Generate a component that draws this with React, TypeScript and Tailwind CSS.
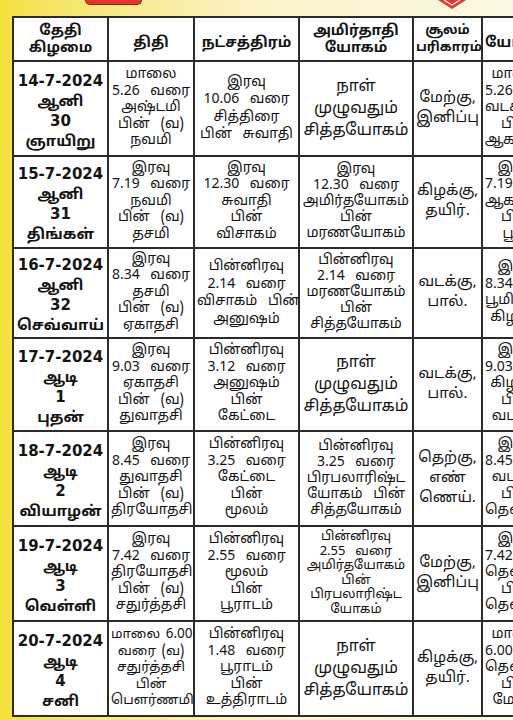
const tamil = "font-['Noto_Sans_Tamil','Lohit_Tamil','Noto_Sans',sans-serif]";

type Row = {
	h: string;
	date: string[];
	thithi: string[];
	star: string[];
	yogam: string[];
	bigYogam?: boolean;
	soolam: string[];
	yogini: string[];
};

const rows: Row[] = [
	{
		h: "h-[95px]",
		date: ["14-7-2024", "ஆனி", "30", "ஞாயிறு"],
		thithi: ["மாலை", "5.26 வரை", "அஷ்டமி", "பின் (வ)", "நவமி"],
		star: ["இரவு", "10.06 வரை", "சித்திரை", "பின் சுவாதி"],
		yogam: ["நாள்", "முழுவதும்", "சித்தயோகம்"],
		bigYogam: true,
		soolam: ["மேற்கு,", "இனிப்பு"],
		yogini: ["மாலை", "5.26 வரை", "வடகிழக்கு", "பின்", "ஆகாயம்"],
	},
	{
		h: "h-[92px]",
		date: ["15-7-2024", "ஆனி", "31", "திங்கள்"],
		thithi: ["இரவு", "7.19 வரை", "நவமி", "பின் (வ)", "தசமி"],
		star: ["இரவு", "12.30 வரை", "சுவாதி", "பின்", "விசாகம்"],
		yogam: ["இரவு", "12.30 வரை", "அமிர்தயோகம்", "பின்", "மரணயோகம்"],
		soolam: ["கிழக்கு,", "தயிர்."],
		yogini: ["இரவு", "7.19 வரை", "ஆகாயம்", "பின்", "பூமி"],
	},
	{
		h: "h-[90px]",
		date: ["16-7-2024", "ஆனி", "32", "செவ்வாய்"],
		thithi: ["இரவு", "8.34 வரை", "தசமி", "பின் (வ)", "ஏகாதசி"],
		star: ["பின்னிரவு", "2.14 வரை", "விசாகம் பின்", "அனுஷம்"],
		yogam: ["பின்னிரவு", "2.14 வரை", "மரணயோகம்", "பின்", "சித்தயோகம்"],
		soolam: ["வடக்கு,", "பால்."],
		yogini: ["இரவு", "8.34 வரை", "பூமி பின்", "கிழக்கு"],
	},
	{
		h: "h-[93px]",
		date: ["17-7-2024", "ஆடி", "1", "புதன்"],
		thithi: ["இரவு", "9.03 வரை", "ஏகாதசி", "பின் (வ)", "துவாதசி"],
		star: ["பின்னிரவு", "3.12 வரை", "அனுஷம்", "பின்", "கேட்டை"],
		yogam: ["நாள்", "முழுவதும்", "சித்தயோகம்"],
		bigYogam: true,
		soolam: ["வடக்கு,", "பால்."],
		yogini: ["இரவு", "9.03 வரை", "கிழக்கு", "பின்", "வடக்கு"],
	},
	{
		h: "h-[95px]",
		date: ["18-7-2024", "ஆடி", "2", "வியாழன்"],
		thithi: ["இரவு", "8.45 வரை", "துவாதசி", "பின் (வ)", "திரயோதசி"],
		star: ["பின்னிரவு", "3.25 வரை", "கேட்டை", "பின்", "மூலம்"],
		yogam: ["பின்னிரவு", "3.25 வரை", "பிரபலாரிஷ்ட", "யோகம் பின்", "சித்தயோகம்"],
		soolam: ["தெற்கு,", "எண்", "ணெய்."],
		yogini: ["இரவு", "8.45 வரை", "வடக்கு", "பின்", "தென்கிழக்கு"],
	},
	{
		h: "h-[95px]",
		date: ["19-7-2024", "ஆடி", "3", "வெள்ளி"],
		thithi: ["இரவு", "7.42 வரை", "திரயோதசி", "பின் (வ)", "சதுர்த்தசி"],
		star: ["பின்னிரவு", "2.55 வரை", "மூலம்", "பின்", "பூராடம்"],
		yogam: ["பின்னிரவு", "2.55 வரை", "அமிர்தயோகம்", "பின்", "பிரபலாரிஷ்ட", "யோகம்"],
		soolam: ["மேற்கு,", "இனிப்பு"],
		yogini: ["இரவு", "7.42 வரை", "தென்கிழக்கு", "பின்", "தென்மேற்கு"],
	},
	{
		h: "h-[95px]",
		date: ["20-7-2024", "ஆடி", "4", "சனி"],
		thithi: ["மாலை 6.00", "வரை (வ)", "சதுர்த்தசி", "பின்", "பௌர்ணமி"],
		star: ["பின்னிரவு", "1.48 வரை", "பூராடம்", "பின்", "உத்திராடம்"],
		yogam: ["நாள்", "முழுவதும்", "சித்தயோகம்"],
		bigYogam: true,
		soolam: ["கிழக்கு,", "தயிர்."],
		yogini: ["மாலை", "6.00 வரை", "தென்மேற்கு", "பின்", "மேற்கு"],
	},
];

const headers = [
	{ lines: ["தேதி", "கிழமை"], w: "w-[95px]", size: "text-[14.5px]" },
	{ lines: ["திதி"], w: "w-[86px]", size: "text-[14.5px]" },
	{ lines: ["நட்சத்திரம்"], w: "w-[105px]", size: "text-[14.5px]" },
	{ lines: ["அமிர்தாதி", "யோகம்"], w: "w-[114px]", size: "text-[14.5px]" },
	{ lines: ["சூலம்", "பரிகாரம்"], w: "w-[69px]", size: "text-[13px]" },
	{ lines: ["யோகினி"], w: "w-[70px]", size: "text-[14.5px]" },
];

function Lines({ lines, className }: { lines: string[]; className?: string }) {
	return (
		<div className={className}>
			{lines.map((l, i) => (
				<div key={i} className="whitespace-nowrap">
					{l}
				</div>
			))}
		</div>
	);
}

const cell = "border-2 border-[#2b2b2b] align-middle text-center px-0.5";
// the print uses wide word gaps in the small text
const small = "text-[14px] [word-spacing:0.5em]";

export default function App() {
	return (
		<div
			className={`w-[513px] h-[720px] overflow-hidden bg-gradient-to-r from-[#f5e03c] via-[#fbf3c8] to-[#fcf8e4] text-[#141414] ${tamil}`}
		>
			{/* top decorations, cut off in the scan */}
			<div className="h-[16px] flex items-start">
				<div className="ml-[85px] w-[57px] h-[5px] bg-[#e4352a] rounded-b-md border-b border-x border-[#9c1d16]" />
				<svg className="ml-[296px]" width="28" height="9" viewBox="0 0 28 9">
					<path d="M0 0 L14 9 L28 0 Z" fill="#e4352a" />
					<path d="M6 0 L14 5 L22 0" fill="none" stroke="#fff" strokeWidth="1.2" />
				</svg>
			</div>
			<div className="pl-[12px]">
				<table className="table-fixed border-collapse bg-white w-[539px]">
					<thead>
						<tr className="h-[44px]">
							{headers.map((h, i) => (
								<th
									key={i}
									className={`${cell} ${h.w} ${h.size} font-bold leading-[17px] ${h.lines.length === 1 ? "pt-2" : "pt-0.5"}`}
								>
									<Lines lines={h.lines} />
								</th>
							))}
						</tr>
					</thead>
					<tbody>
						{rows.map((r, i) => (
							<tr key={i} className={r.h}>
								<td className={`${cell} pt-1`}>
									<div className="font-bold text-[15px] leading-[20px] font-['DejaVu_Sans','Noto_Sans_Tamil',sans-serif]">
										{r.date.map((l, j) => (
											<div key={j} className="whitespace-nowrap">
												{l}
											</div>
										))}
									</div>
								</td>
								<td className={cell}>
									<Lines
										lines={r.thithi}
										className={
											r.thithi[0].includes(" ")
												? "text-[13.5px] [word-spacing:0.15em] leading-[16.5px]"
												: `${small} leading-[16.5px]`
										}
									/>
								</td>
								<td className={cell}>
									<Lines
										lines={r.star}
										className={`${small} ${r.star.length > 4 ? "leading-[16.5px]" : "leading-[17.5px]"}`}
									/>
								</td>
								<td className={cell}>
									{r.bigYogam ? (
										<Lines lines={r.yogam} className="text-[16px] leading-[22px]" />
									) : (
										<Lines
											lines={r.yogam}
											className={
												r.yogam.length > 5
													? "text-[13px] [word-spacing:0.5em] leading-[14.5px]"
													: `${small} leading-[16px]`
											}
										/>
									)}
								</td>
								<td className={cell}>
									<Lines lines={r.soolam} className="text-[15px] leading-[20px]" />
								</td>
								<td className={cell}>
									<Lines lines={r.yogini} className={`${small} leading-[16.5px]`} />
								</td>
							</tr>
						))}
					</tbody>
				</table>
			</div>
		</div>
	);
}
